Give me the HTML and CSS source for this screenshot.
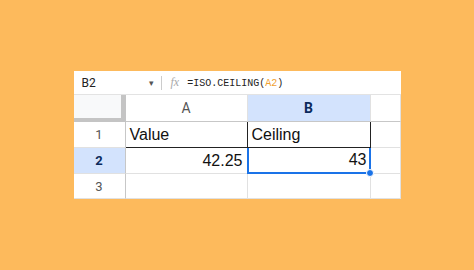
FILE: index.html
```html
<!doctype html>
<html lang="en">
<head>
<meta charset="utf-8">
<title>ISO.CEILING</title>
<link rel="stylesheet" href="styles.css">
</head>
<body>

	<div class="sheet">

		<div class="fbar">
			<span class="ref">B2</span>
			<span class="drop">&#9662;</span>
			<span class="sep"></span>
			<span class="fx">fx</span>
			<span class="formula">=ISO.CEILING(<span class="arg">A2</span>)</span>
		</div>

		<div class="grid">
			<div class="corner"></div>
			<div class="colhead">A</div>
			<div class="colhead on">B</div>
			<div class="colhead"></div>

			<div class="rowhead">1</div>
			<div class="cell b-bottom">Value</div>
			<div class="cell b-bottom b-sides">Ceiling</div>
			<div class="cell"></div>

			<div class="rowhead on">2</div>
			<div class="cell num">42.25</div>
			<div class="cell num sel">43<span class="handle"></span></div>
			<div class="cell"></div>

			<div class="rowhead">3</div>
			<div class="cell"></div>
			<div class="cell"></div>
			<div class="cell"></div>
		</div>

	</div>

</body>
</html>
```

FILE: styles.css
```css
	html, body { height: 100%; margin: 0; }

	body { align-items: center; background-color: #fdba5c; display: flex; justify-content: center;
		font: 13px "Liberation Sans", Arial, sans-serif; }

	.sheet { background-color: white; width: 327px; }

	/* formula bar */
	.fbar { align-items: center; border-bottom: 1px solid #e3e3e3; box-sizing: border-box; color: #222; display: flex; height: 24px; }
	.ref { font: 12px Roboto, sans-serif; padding-left: 8px; width: 67px; }
	.drop { color: #555; font-size: 9px; width: 11px; }
	.sep { background-color: #ccc; height: 14px; margin: 0 9px 0 1px; width: 1px; }
	.fx { color: #aaa; font: italic 12px "Liberation Serif", serif; margin-right: 8px; }
	.formula { font: 10px "Liberation Mono", monospace; padding-top: 1px; }
	.arg { color: #f0a030; }

	/* grid */
	.grid { display: grid; grid-template-columns: 52px 122px 123px 30px; grid-template-rows: 27px 26px 26px 25px; }
	.grid > div { border-bottom: 1px solid #e1e1e1; border-right: 1px solid #e1e1e1; box-sizing: border-box; }

	.corner { background-color: #f8f9fa; border-bottom: 4px solid #c4c4c4 !important; border-right: 5px solid #c4c4c4 !important; }

	.colhead, .rowhead { align-items: center; color: #555; display: flex; font: 14px Roboto, sans-serif; justify-content: center; }
	.colhead { border-bottom-color: #c7c7c7 !important; }
	.rowhead { border-right-color: #c7c7c7 !important; font-size: 13px; }
	.on { background-color: #d3e3fd; color: #0b2a5c; font-weight: bold; }

	.cell { align-items: center; color: #111; display: flex; font-size: 16px; padding: 0 4px; }
	.num { justify-content: flex-end; }

	.b-bottom { border-bottom: 1px solid #222 !important; }
	.b-sides { border-left: 1px solid #222; border-right: 1px solid #222 !important; margin-left: -1px; }

	.sel { border: 2px solid #1a73e8 !important; border-top: none !important; margin-left: -1px; padding-right: 2px; position: relative; }
	.handle { background-color: #1a73e8; border: 1px solid white; border-radius: 50%; bottom: -5px; height: 6px; position: absolute; right: -5px; width: 6px; }
```
